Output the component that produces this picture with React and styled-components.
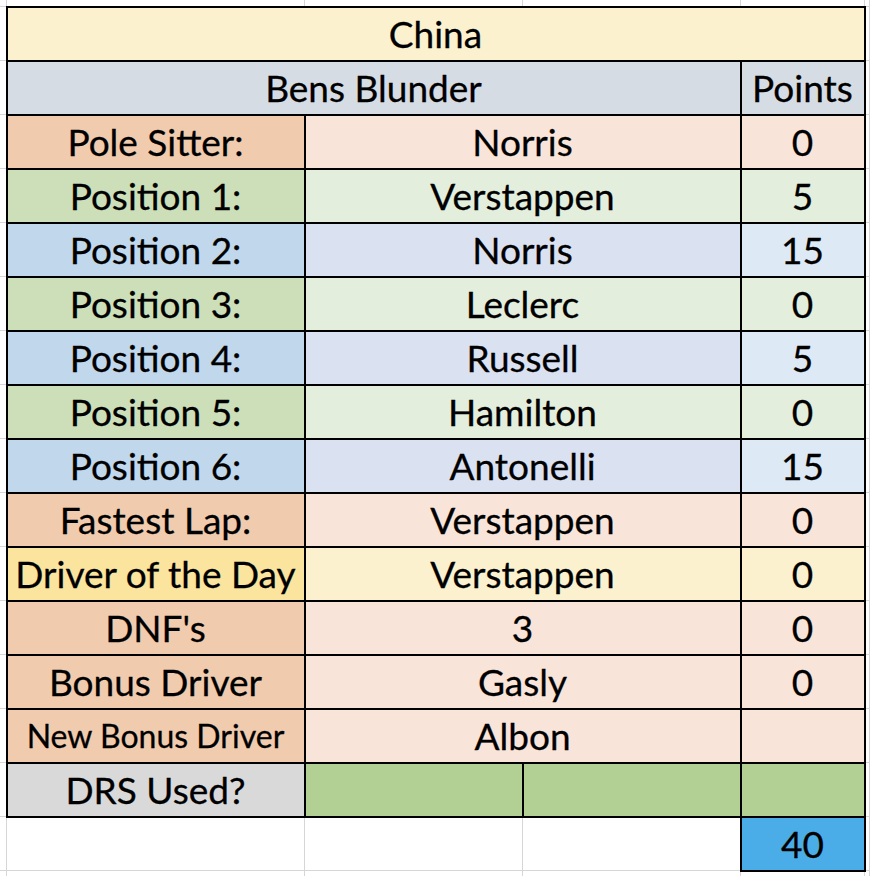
import styled, { createGlobalStyle } from "styled-components";

const GlobalStyle = createGlobalStyle`
  html, body {
    margin: 0;
    padding: 0;
    background: #ffffff;
  }
  body {
    font-family: Lato, "Liberation Sans", sans-serif;
    overflow: hidden;
  }
`;

const colors = {
  yellow: "#fbf1cf",
  slate: "#d6dce4",
  peach: "#f1cbae",
  peachLight: "#f9e4da",
  green: "#cddfb9",
  greenLight: "#e3eedc",
  blue: "#c0d7ec",
  lavender: "#dae1f1",
  blueLight: "#ddeaf6",
  gold: "#fbe49e",
  gray: "#d9d9d9",
  drs: "#b2cf94",
  total: "#4aade8",
};

const rows = [
  { label: "Pole Sitter:", value: "Norris", points: "0", tone: "peach" },
  { label: "Position 1:", value: "Verstappen", points: "5", tone: "green" },
  { label: "Position 2:", value: "Norris", points: "15", tone: "blue" },
  { label: "Position 3:", value: "Leclerc", points: "0", tone: "green" },
  { label: "Position 4:", value: "Russell", points: "5", tone: "blue" },
  { label: "Position 5:", value: "Hamilton", points: "0", tone: "green" },
  { label: "Position 6:", value: "Antonelli", points: "15", tone: "blue" },
  { label: "Fastest Lap:", value: "Verstappen", points: "0", tone: "peach" },
  { label: "Driver of the Day", value: "Verstappen", points: "0", tone: "gold" },
  { label: "DNF's", value: "3", points: "0", tone: "peach" },
  { label: "Bonus Driver", value: "Gasly", points: "0", tone: "peach" },
  { label: "New Bonus Driver", value: "Albon", points: "", tone: "peach", small: true },
];

const tones = {
  peach: { label: colors.peach, value: colors.peachLight, points: colors.peachLight },
  green: { label: colors.green, value: colors.greenLight, points: colors.greenLight },
  blue: { label: colors.blue, value: colors.lavender, points: colors.blueLight },
  gold: { label: colors.gold, value: colors.yellow, points: colors.yellow },
};

const App = () => {
  return (
    <>
      <GlobalStyle />
      <Sheet>
        <colgroup>
          <col style={{ width: 7 }} />
          <col style={{ width: 298 }} />
          <col style={{ width: 218 }} />
          <col style={{ width: 218 }} />
          <col style={{ width: 124 }} />
          <col style={{ width: 5 }} />
        </colgroup>
        <tbody>
          <EdgeRow>
            <Blank />
            <Blank />
            <Blank />
            <Blank />
            <Blank />
            <Blank />
          </EdgeRow>
          <Row>
            <Blank />
            <Cell colSpan={4} $bg={colors.yellow}>China</Cell>
            <Blank />
          </Row>
          <Row>
            <Blank />
            <Cell colSpan={3} $bg={colors.slate}>Bens Blunder</Cell>
            <Cell $bg={colors.slate}>Points</Cell>
            <Blank />
          </Row>
          {rows.map((r) => (
            <Row key={r.label}>
              <Blank />
              <Cell $bg={tones[r.tone].label} $small={r.small}>{r.label}</Cell>
              <Cell colSpan={2} $bg={tones[r.tone].value}>{r.value}</Cell>
              <Cell $bg={tones[r.tone].points}>{r.points}</Cell>
              <Blank />
            </Row>
          ))}
          <Row>
            <Blank />
            <Cell $bg={colors.gray}>DRS Used?</Cell>
            <Cell $bg={colors.drs} />
            <Cell $bg={colors.drs} />
            <Cell $bg={colors.drs} />
            <Blank />
          </Row>
          <Row>
            <Blank />
            <Blank />
            <Blank />
            <Blank />
            <Cell $bg={colors.total}>40</Cell>
            <Blank />
          </Row>
          <EdgeRow>
            <Blank />
            <Blank />
            <Blank />
            <Blank />
            <Blank />
            <Blank />
          </EdgeRow>
        </tbody>
      </Sheet>
    </>
  );
};
export default App;

const Sheet = styled.table`
  border-collapse: collapse;
  table-layout: fixed;
  width: 870px;
  margin-top: -1px;
  margin-left: -1px;
`;
const Row = styled.tr`
  height: 54px;
`;
const EdgeRow = styled.tr`
  height: 7px;
`;
const Cell = styled.td`
  border: 2px solid #000;
  background: ${(p) => p.$bg || "#fff"};
  padding: 0;
  text-align: center;
  vertical-align: middle;
  white-space: nowrap;
  overflow: hidden;
  color: #000;
  font-size: ${(p) => (p.$small ? "32px" : "37px")};
  line-height: 1;
  -webkit-text-stroke: 0.3px #000;
`;
const Blank = styled.td`
  border: 1px solid #d6d6d6;
  background: #fff;
  padding: 0;
`;
